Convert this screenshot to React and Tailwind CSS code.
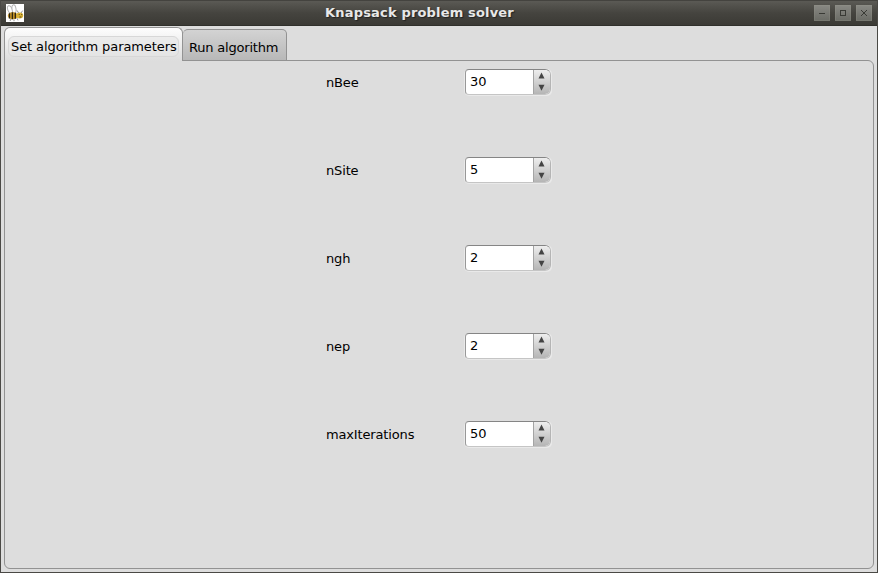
import React from "react";

const fields = [
  { name: "nBee", value: "30" },
  { name: "nSite", value: "5" },
  { name: "ngh", value: "2" },
  { name: "nep", value: "2" },
  { name: "maxIterations", value: "50" },
];

function Bee() {
  return (
    <svg width="18" height="18" viewBox="0 0 18 18" className="shrink-0 bg-white">
      <g fill="#fff" stroke="#b4b4b4" strokeWidth="1">
        <ellipse cx="4" cy="5.5" rx="2.2" ry="4" transform="rotate(-22 4 5.5)" />
        <ellipse cx="8" cy="5" rx="2" ry="4.3" transform="rotate(-8 8 5)" />
      </g>
      <ellipse cx="6.8" cy="11.8" rx="5" ry="3.5" fill="#dca62b" />
      <path d="M3.5 9.2v5.2M6.4 8.3v7M9.3 8.8v6" stroke="#2c2410" strokeWidth="1.5" />
      <ellipse cx="13.7" cy="11.5" rx="3.5" ry="3" fill="#d9b235" />
      <path d="M12.5 9 11.2 6.5M15 9l1.7-2.4M5 15l-1 2M8 15.5v1.7M11 14.2l1 2.2" stroke="#777" strokeWidth=".8" fill="none" />
      <path d="M12.7 10.6h1M15.2 10.6h1M13.4 13h2" stroke="#4b3b18" strokeWidth=".9" />
    </svg>
  );
}

function WindowButton({ children }) {
  return (
    <button className="h-4 w-4 shrink-0 bg-linear-to-b from-[#898984] to-[#6a6b65] shadow-[inset_0_0_0_1px_rgba(150,150,140,0.25)]">
      <svg width="16" height="16" viewBox="0 0 16 16" shapeRendering="crispEdges" fill="#393a35">
        {children}
      </svg>
    </button>
  );
}

function SpinBox({ value }) {
  return (
    <div className="flex h-[27px] w-[88px] rounded-[5px] bg-[#e9e9e9] pr-px pb-px pl-px">
      <div className="flex min-w-0 flex-1 overflow-hidden rounded-[4px] rounded-r-[6px] border border-t-[#858585] border-r-[#b4b4b4] border-b-[#c5c5c5] border-l-[#989898] bg-white">
        <div className="w-[67px] shrink-0 pl-[4px] text-[13px] leading-[24px] tracking-[-0.1px]">{value}</div>
        <div className="flex-1 border-l border-[#a4a4a4] bg-linear-to-b from-[#eeeeee] to-[#b5b5b5]">
          <svg width="16" height="24" viewBox="0 0 16 24" fill="#444">
            <path d="M4.5 8.4h6l-3-6z" />
            <path d="M4.5 14.8h6l-3 6z" />
          </svg>
        </div>
      </div>
    </div>
  );
}

export default function App() {
  return (
    <div className="flex h-[573px] w-[878px] flex-col overflow-hidden border-x border-b border-[#4a4945] bg-[#dddddd] font-['DejaVu_Sans',sans-serif] text-[13px] text-black">
      <header className="flex h-[26px] shrink-0 items-center border-t border-b border-t-[#44433f] border-b-[#30302b] bg-linear-to-b from-[#5b5a55] via-[#45443f] to-[#3b3a35] pr-[5px] pl-[5px]">
        <Bee />
        <div className="flex-1 pl-[34px] pr-[33px] text-center leading-[24px] font-bold tracking-[0.17px] whitespace-nowrap text-[#e8e8e8] [text-shadow:1px_1px_1px_#222]">
          Knapsack problem solver
        </div>
        <div className="flex gap-[5px]">
          <WindowButton><path d="M5 8h6v1H5z" /></WindowButton>
          <WindowButton><path fillRule="evenodd" d="M5 5h6v6H5zM6 6v4h4V6z" /></WindowButton>
          <WindowButton>
            <path d="M5 5h1v1h1v1h2V6h1V5h1v1h-1v1H9v2h1v1h1v1h-1v-1H9V9H7v1H6v1H5v-1h1V9h1V7H6V6H5z" />
          </WindowButton>
        </div>
      </header>

      <nav className="z-10 flex h-[35px] shrink-0 items-end pl-[3px]">
        <div className="h-[34px] w-[179px] rounded-t-[6px] border border-b-0 border-[#939393] bg-linear-to-b from-[#fdfdfd] to-[#dddddd] pt-[8px] pl-[3px]">
          <div className="h-[21px] w-[171px] rounded-[6px] border border-[#d7d7d7] bg-[#e6e6e6]/60 pl-[2px] leading-[19px] tracking-[-0.09px] whitespace-nowrap">Set algorithm parameters</div>
        </div>
        <div className="h-[32px] w-[104px] rounded-t-[5px] border border-l-0 border-[#929292] bg-linear-to-b from-[#d3d3d3] to-[#b8b8b8] pl-[6px] leading-[35px] tracking-[-0.2px] whitespace-nowrap">Run algorithm</div>
      </nav>

      <main className="mx-[3px] -mt-px flex h-[509px] shrink-0 flex-col rounded-[6px] rounded-tl-none border border-[#929292] bg-[#dddddd] pt-[8px] pl-[321px]">
        {fields.map(({ name, value }) => (
          <div key={name} className="flex h-[88px] items-start">
            <div className="w-[138px] leading-[27px] tracking-[-0.15px]">{name}</div>
            <SpinBox value={value} />
          </div>
        ))}
      </main>
    </div>
  );
}
